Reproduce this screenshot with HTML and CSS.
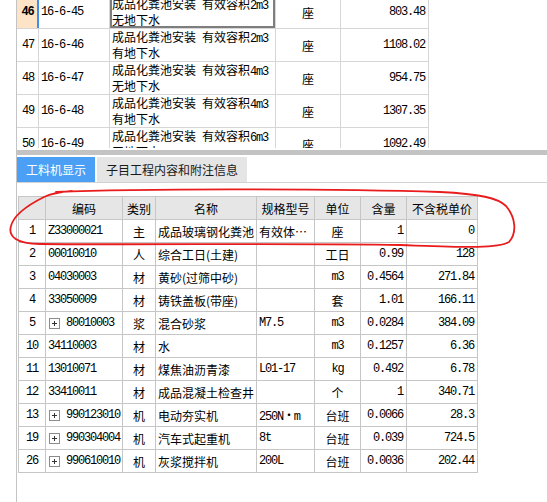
FILE: index.html
```html
<!DOCTYPE html>
<html lang="zh-CN">
<head>
<meta charset="utf-8">
<title>工料机显示</title>
<link rel="stylesheet" href="styles.css">
</head>
<body>
<div class="app">
  <div class="pane">
    <div class="top-pane">
      <div class="grid-top">
        <div class="trow active">
          <div class="tc c-num n b">46</div>
          <div class="tc c-code n">16-6-45</div>
          <div class="tc c-name sel"><div class="nm">成品化粪池安装<span class="n"> </span>有效容积<span class="n">2m3</span><br>无地下水</div></div>
          <div class="tc c-unit">座</div>
          <div class="tc c-price n">803.48</div>
        </div>
        <div class="trow">
          <div class="tc c-num n">47</div>
          <div class="tc c-code n">16-6-46</div>
          <div class="tc c-name"><div class="nm">成品化粪池安装<span class="n"> </span>有效容积<span class="n">2m3</span><br>有地下水</div></div>
          <div class="tc c-unit">座</div>
          <div class="tc c-price n">1108.02</div>
        </div>
        <div class="trow">
          <div class="tc c-num n">48</div>
          <div class="tc c-code n">16-6-47</div>
          <div class="tc c-name"><div class="nm">成品化粪池安装<span class="n"> </span>有效容积<span class="n">4m3</span><br>无地下水</div></div>
          <div class="tc c-unit">座</div>
          <div class="tc c-price n">954.75</div>
        </div>
        <div class="trow">
          <div class="tc c-num n">49</div>
          <div class="tc c-code n">16-6-48</div>
          <div class="tc c-name"><div class="nm">成品化粪池安装<span class="n"> </span>有效容积<span class="n">4m3</span><br>有地下水</div></div>
          <div class="tc c-unit">座</div>
          <div class="tc c-price n">1307.35</div>
        </div>
        <div class="trow">
          <div class="tc c-num n">50</div>
          <div class="tc c-code n">16-6-49</div>
          <div class="tc c-name"><div class="nm">成品化粪池安装<span class="n"> </span>有效容积<span class="n">6m3</span><br>无地下水</div></div>
          <div class="tc c-unit">座</div>
          <div class="tc c-price n">1092.49</div>
        </div>
      </div>
    </div>
    <div class="hbar"></div>
    <div class="tabs">
      <div class="tab active">工料机显示</div>
      <div class="tab">子目工程内容和附注信息</div>
    </div>
    <div class="tabline"></div>
    <div class="grid-bot">
      <div class="brow head">
        <div class="bc k1"></div>
        <div class="bc k2 ctr">编码</div>
        <div class="bc k3 ctr">类别</div>
        <div class="bc k4 ctr">名称</div>
        <div class="bc k5 ctr">规格型号</div>
        <div class="bc k6 ctr">单位</div>
        <div class="bc k7 ctr">含量</div>
        <div class="bc k8 ctr">不含税单价</div>
      </div>
      <div class="brow">
        <div class="bc k1 ctr n">1</div>
        <div class="bc k2 n">Z33000021</div>
        <div class="bc k3 ctr">主</div>
        <div class="bc k4">成品玻璃钢化粪池</div>
        <div class="bc k5">有效体…</div>
        <div class="bc k6 ctr">座</div>
        <div class="bc k7 rt n">1</div>
        <div class="bc k8 rt n">0</div>
      </div>
      <div class="brow">
        <div class="bc k1 ctr n">2</div>
        <div class="bc k2 n">00010010</div>
        <div class="bc k3 ctr">人</div>
        <div class="bc k4">综合工日(土建)</div>
        <div class="bc k5"></div>
        <div class="bc k6 ctr">工日</div>
        <div class="bc k7 rt n">0.99</div>
        <div class="bc k8 rt n">128</div>
      </div>
      <div class="brow">
        <div class="bc k1 ctr n">3</div>
        <div class="bc k2 n">04030003</div>
        <div class="bc k3 ctr">材</div>
        <div class="bc k4">黄砂(过筛中砂)</div>
        <div class="bc k5"></div>
        <div class="bc k6 ctr n">m3</div>
        <div class="bc k7 rt n">0.4564</div>
        <div class="bc k8 rt n">271.84</div>
      </div>
      <div class="brow">
        <div class="bc k1 ctr n">4</div>
        <div class="bc k2 n">33050009</div>
        <div class="bc k3 ctr">材</div>
        <div class="bc k4">铸铁盖板(带座)</div>
        <div class="bc k5"></div>
        <div class="bc k6 ctr">套</div>
        <div class="bc k7 rt n">1.01</div>
        <div class="bc k8 rt n">166.11</div>
      </div>
      <div class="brow">
        <div class="bc k1 ctr n">5</div>
        <div class="bc k2 n"><span class="plus"></span>80010003</div>
        <div class="bc k3 ctr">浆</div>
        <div class="bc k4">混合砂浆</div>
        <div class="bc k5 n">M7.5</div>
        <div class="bc k6 ctr n">m3</div>
        <div class="bc k7 rt n">0.0284</div>
        <div class="bc k8 rt n">384.09</div>
      </div>
      <div class="brow">
        <div class="bc k1 ctr n">10</div>
        <div class="bc k2 n">34110003</div>
        <div class="bc k3 ctr">材</div>
        <div class="bc k4">水</div>
        <div class="bc k5"></div>
        <div class="bc k6 ctr n">m3</div>
        <div class="bc k7 rt n">0.1257</div>
        <div class="bc k8 rt n">6.36</div>
      </div>
      <div class="brow">
        <div class="bc k1 ctr n">11</div>
        <div class="bc k2 n">13010071</div>
        <div class="bc k3 ctr">材</div>
        <div class="bc k4">煤焦油沥青漆</div>
        <div class="bc k5 n">L01-17</div>
        <div class="bc k6 ctr n">kg</div>
        <div class="bc k7 rt n">0.492</div>
        <div class="bc k8 rt n">6.78</div>
      </div>
      <div class="brow">
        <div class="bc k1 ctr n">12</div>
        <div class="bc k2 n">33410011</div>
        <div class="bc k3 ctr">材</div>
        <div class="bc k4">成品混凝土检查井</div>
        <div class="bc k5"></div>
        <div class="bc k6 ctr">个</div>
        <div class="bc k7 rt n">1</div>
        <div class="bc k8 rt n">340.71</div>
      </div>
      <div class="brow">
        <div class="bc k1 ctr n">13</div>
        <div class="bc k2 n"><span class="plus"></span>990123010</div>
        <div class="bc k3 ctr">机</div>
        <div class="bc k4">电动夯实机</div>
        <div class="bc k5 n">250N・m</div>
        <div class="bc k6 ctr">台班</div>
        <div class="bc k7 rt n">0.0066</div>
        <div class="bc k8 rt n">28.3</div>
      </div>
      <div class="brow">
        <div class="bc k1 ctr n">19</div>
        <div class="bc k2 n"><span class="plus"></span>990304004</div>
        <div class="bc k3 ctr">机</div>
        <div class="bc k4">汽车式起重机</div>
        <div class="bc k5 n">8t</div>
        <div class="bc k6 ctr">台班</div>
        <div class="bc k7 rt n">0.039</div>
        <div class="bc k8 rt n">724.5</div>
      </div>
      <div class="brow">
        <div class="bc k1 ctr n">26</div>
        <div class="bc k2 n"><span class="plus"></span>990610010</div>
        <div class="bc k3 ctr">机</div>
        <div class="bc k4">灰浆搅拌机</div>
        <div class="bc k5 n">200L</div>
        <div class="bc k6 ctr">台班</div>
        <div class="bc k7 rt n">0.0036</div>
        <div class="bc k8 rt n">202.44</div>
      </div>
    </div>
  </div>
  <svg class="annot" width="547" height="502" viewBox="0 0 547 502">
    <path d="M 56 192 C 150 188, 350 189, 440 192 C 480 194, 498 198, 506 206 C 516 218, 517 233, 509 242 C 497 249, 460 247, 400 245 C 300 243, 150 245, 40 244 C 16 244, 8 236, 11 226 C 14 214, 30 204, 44 197 C 50 194, 58 192, 72 191" />
  </svg>
</div>
</body>
</html>
```

FILE: styles.css
```css
* {
  box-sizing: border-box;
}

body {
  margin: 0;
  background: #fff;
  color: #000;
  font-family: "Noto Sans CJK SC", "Noto Sans", sans-serif;
  font-size: 12px;
}

.app {
  position: relative;
  width: 547px;
  height: 502px;
  overflow: hidden;
}

.pane {
  margin-left: 16px;
  height: 502px;
  border-left: 1px solid #c4c4c4;
}

.n {
  font-family: "Liberation Mono", "Noto Sans CJK SC", monospace;
  font-size: 12px;
  letter-spacing: -1.2px;
}

.b {
  font-weight: bold;
}

/* top grid */
.top-pane {
  height: 148px;
  overflow: hidden;
}

.grid-top {
  margin-top: -4px;
  width: 412px;
}

.trow {
  display: flex;
  height: 33px;
  border-bottom: 1px solid #d6d6d6;
}

.tc {
  display: flex;
  align-items: center;
  border-right: 1px solid #d6d6d6;
  white-space: nowrap;
}

.c-num { width: 22px; justify-content: center; padding-left: 1px; }
.c-code { width: 71px; padding-left: 2px; }
.c-name { width: 166px; padding-left: 2px; }
.c-unit { width: 65px; justify-content: center; }
.c-price { width: 88px; justify-content: flex-end; padding-right: 3px; }

.nm {
  line-height: 14px;
  white-space: pre;
}

.trow.active .c-num {
  background: #fde4c6;
  border-right: 2px solid #3f8ef0;
}

.c-name.sel {
  box-shadow: inset 0 0 0 2px #7e7e7e;
}

.hbar {
  margin-top: 2px;
  height: 5px;
  background: #c3c3c3;
}

.tabs {
  display: flex;
  gap: 2px;
  margin-top: 2px;
  height: 25px;
}

.tab {
  display: flex;
  align-items: center;
  padding: 0 9px;
  background: #e5e5e5;
  color: #1a1a1a;
}

.tab.active {
  background: #4b9ff4;
  color: #fff;
}

.tabline {
  height: 1px;
  background: #d2d2d2;
}

/* bottom grid */
.grid-bot {
  margin-top: 13px;
  margin-left: 1px;
  width: 460px;
  border-top: 1px solid #c6c6c6;
  border-left: 1px solid #c6c6c6;
}

.brow {
  display: flex;
  height: 23px;
  border-bottom: 1px solid #c6c6c6;
}

.bc {
  display: flex;
  align-items: center;
  border-right: 1px solid #c6c6c6;
  padding-left: 2px;
  white-space: nowrap;
  overflow: hidden;
}

.brow.head .bc {
  background: #e6e6e6;
}

.k1 { width: 27px; }
.k2 { width: 77px; }
.k3 { width: 33px; }
.k4 { width: 101px; }
.k5 { width: 58px; }
.k6 { width: 46px; }
.k7 { width: 46px; }
.k8 { width: 71px; }

.ctr { justify-content: center; padding-left: 0; }
.rt { justify-content: flex-end; padding-left: 0; padding-right: 3px; }

.plus {
  position: relative;
  display: inline-block;
  flex: none;
  width: 11px;
  height: 11px;
  margin-left: 1px;
  margin-right: 6px;
  border: 1px solid #8c8c8c;
  background: #fff;
}

.plus::before,
.plus::after {
  content: "";
  position: absolute;
  background: #333;
}

.plus::before {
  left: 2px;
  top: 4px;
  width: 5px;
  height: 1px;
}

.plus::after {
  left: 4px;
  top: 2px;
  width: 1px;
  height: 5px;
}

.annot {
  position: absolute;
  left: 0;
  top: 0;
  pointer-events: none;
}

.annot path {
  fill: none;
  stroke: #e81c1c;
  stroke-width: 1.8;
  stroke-linecap: round;
  stroke-linejoin: round;
}
```
